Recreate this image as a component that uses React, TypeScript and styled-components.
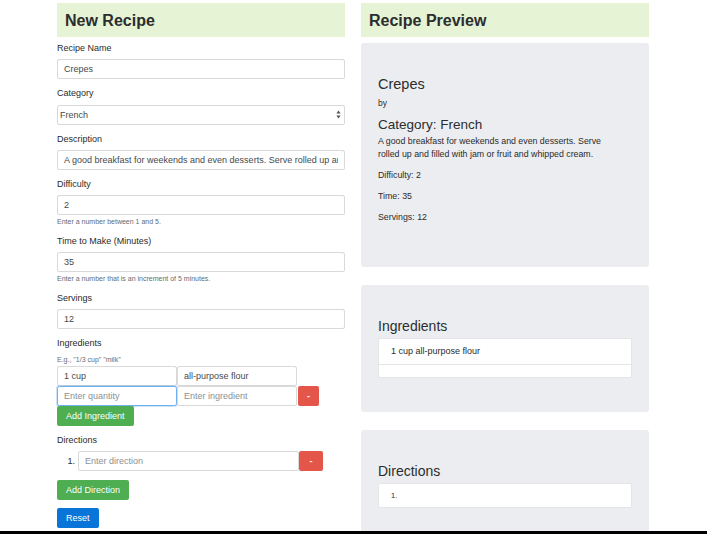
import React, { useState } from "react";
import styled, { createGlobalStyle, css } from "styled-components";

const GlobalStyle = createGlobalStyle`
  html, body {
    margin: 0;
    padding: 0;
    overflow: hidden;
    background: #ffffff;
  }
  body {
    font-family: "Liberation Sans", Arial, Helvetica, sans-serif;
    color: #292b2c;
  }
  * { box-sizing: border-box; }
`;

const Page = styled.div`
  display: grid;
  grid-template-columns: 288px 288px;
  column-gap: 16px;
  padding: 3px 0 0 57px;
  align-items: start;
`;

const Column = styled.section`
  display: flex;
  flex-direction: column;
`;

const SectionHeader = styled.h2`
  margin: 0;
  height: 34px;
  line-height: 35px;
  padding-left: 8px;
  background: #e7f3d5;
  font-size: 16px;
  font-weight: 700;
  color: #2b2d2e;
`;

const Form = styled.form`
  display: flex;
  flex-direction: column;
  padding-top: 5px;
`;

const FormGroup = styled.div`
  display: flex;
  flex-direction: column;
  margin-bottom: 8px;
`;

const Label = styled.label`
  font-size: 9px;
  line-height: 13px;
  margin-bottom: 4px;
  color: #292b2c;
`;

const fieldBase = css`
  height: 20px;
  border: 1px solid rgba(0, 0, 0, 0.15);
  border-radius: 2.5px;
  background: #ffffff;
  font-family: "Liberation Sans", Arial, Helvetica, sans-serif;
  font-size: 9px;
  color: #464a4c;
  outline: none;
  &::placeholder {
    color: #8d9092;
  }
`;

const TextInput = styled.input<{ $focused?: boolean; $width?: number }>`
  ${fieldBase};
  width: ${(p) => (p.$width ? `${p.$width}px` : "100%")};
  flex: ${(p) => (p.$width ? "0 0 auto" : "1 1 auto")};
  padding: 0 6px;
  ${(p) =>
    p.$focused &&
    css`
      border-color: #6fb0ee;
      box-shadow: 0 0 0 1px rgba(111, 176, 238, 0.35);
    `}
`;

const SelectWrap = styled.div`
  position: relative;
  width: 100%;
`;

const Select = styled.select`
  ${fieldBase};
  width: 100%;
  padding: 0 0 0 2px;
  appearance: none;
  -webkit-appearance: none;
`;

const SelectArrows = styled.svg`
  position: absolute;
  right: 4px;
  top: 6px;
  pointer-events: none;
`;

const HelpText = styled.small`
  display: block;
  font-size: 7px;
  line-height: 11px;
  margin-top: 1px;
  color: #636c72;
`;

const HintText = styled(HelpText)`
  margin-top: 0;
  margin-bottom: 1px;
  line-height: 11px;
`;

const IngredientRow = styled.div`
  display: flex;
  align-items: center;
`;

const RemoveButton = styled.button<{ $width: number; $gap?: number }>`
  width: ${(p) => p.$width}px;
  height: 20px;
  margin-left: ${(p) => p.$gap ?? 0}px;
  padding: 0;
  border: none;
  border-radius: 2px;
  background: #e5564a;
  color: #ffffff;
  font-family: "Liberation Sans", Arial, sans-serif;
  font-size: 9px;
  font-weight: 700;
  line-height: 20px;
  cursor: pointer;
`;

const Button = styled.button<{ $variant: "success" | "primary"; $top?: number }>`
  align-self: flex-start;
  height: 20px;
  margin-top: ${(p) => p.$top ?? 0}px;
  padding: 0 9px;
  border: none;
  border-radius: 2px;
  background: ${(p) => (p.$variant === "success" ? "#4fae52" : "#0a75d9")};
  color: #ffffff;
  font-family: "Liberation Sans", Arial, sans-serif;
  font-size: 9px;
  line-height: 20px;
  cursor: pointer;
`;

const DirectionRow = styled.div`
  display: flex;
  align-items: center;
`;

const DirectionNumber = styled.span`
  width: 18px;
  margin-right: 3px;
  text-align: right;
  font-size: 9px;
  color: #292b2c;
`;

const PreviewCard = styled.article`
  margin-top: 6px;
  margin-bottom: 12px;
  padding: 33px 17px 34px;
  background: #ecedf0;
  border-radius: 3px;
  & + & {
    margin-top: 6px;
  }
`;

const PreviewTitle = styled.h3`
  margin: 0 0 4px;
  font-size: 14.5px;
  line-height: 17px;
  font-weight: 400;
  color: #2b2d2e;
`;

const ByLine = styled.p`
  margin: 0 0 7px;
  font-size: 8.5px;
  line-height: 13px;
`;

const CategoryTitle = styled.h4`
  margin: 0 0 2px;
  font-size: 13.5px;
  line-height: 16px;
  font-weight: 400;
  color: #2b2d2e;
`;

const PreviewText = styled.p`
  margin: 0 0 8px;
  font-size: 8.8px;
  line-height: 13px;
  color: #292b2c;
  max-width: 240px;
  &:last-child {
    margin-bottom: 9px;
  }
`;

const PreviewHeading = styled.h4`
  margin: 0 0 3px;
  font-size: 14px;
  line-height: 17px;
  font-weight: 400;
  color: #2b2d2e;
`;

const ListGroup = styled.ul`
  margin: 0;
  padding: 0;
  list-style: none;
  background: #ffffff;
  border: 1px solid rgba(0, 0, 0, 0.1);
  border-radius: 2px;
`;

const ListItem = styled.li<{ $small?: boolean }>`
  padding: 6px 12px;
  min-height: 12px;
  font-size: ${(p) => (p.$small ? "7.5px" : "9px")};
  line-height: ${(p) => (p.$small ? "11px" : "13px")};
  color: #292b2c;
  & + & {
    border-top: 1px solid rgba(0, 0, 0, 0.1);
  }
  &:empty {
    min-height: 0;
  }
`;

const BottomEdge = styled.div`
  position: fixed;
  left: 0;
  right: 0;
  bottom: 0;
  height: 3px;
  background: #000000;
`;

type Ingredient = { quantity: string; name: string };

export default function App() {
  const [name, setName] = useState("Crepes");
  const [category, setCategory] = useState("French");
  const [description, setDescription] = useState(
    "A good breakfast for weekends and even desserts. Serve rolled up and filled with jam or fruit and whipped cream."
  );
  const [difficulty, setDifficulty] = useState("2");
  const [time, setTime] = useState("35");
  const [servings, setServings] = useState("12");
  const [ingredients] = useState<Ingredient[]>([{ quantity: "1 cup", name: "all-purpose flour" }]);

  return (
    <>
      <GlobalStyle />
      <Page>
        <Column>
          <SectionHeader>New Recipe</SectionHeader>
          <Form onSubmit={(e) => e.preventDefault()}>
            <FormGroup>
              <Label>Recipe Name</Label>
              <TextInput value={name} onChange={(e) => setName(e.target.value)} />
            </FormGroup>
            <FormGroup>
              <Label>Category</Label>
              <SelectWrap>
                <Select value={category} onChange={(e) => setCategory(e.target.value)}>
                  <option>French</option>
                  <option>Italian</option>
                  <option>American</option>
                </Select>
                <SelectArrows width="5" height="9" viewBox="0 0 5 9">
                  <path d="M2.5 0.5 L4.6 3.6 L0.4 3.6 Z" fill="#555" />
                  <path d="M2.5 8.5 L4.6 5.4 L0.4 5.4 Z" fill="#555" />
                </SelectArrows>
              </SelectWrap>
            </FormGroup>
            <FormGroup>
              <Label>Description</Label>
              <TextInput value={description} onChange={(e) => setDescription(e.target.value)} />
            </FormGroup>
            <FormGroup>
              <Label>Difficulty</Label>
              <TextInput value={difficulty} onChange={(e) => setDifficulty(e.target.value)} />
              <HelpText>Enter a number between 1 and 5.</HelpText>
            </FormGroup>
            <FormGroup>
              <Label>Time to Make (Minutes)</Label>
              <TextInput value={time} onChange={(e) => setTime(e.target.value)} />
              <HelpText>Enter a number that is an increment of 5 minutes.</HelpText>
            </FormGroup>
            <FormGroup>
              <Label>Servings</Label>
              <TextInput value={servings} onChange={(e) => setServings(e.target.value)} />
            </FormGroup>
            <FormGroup>
              <Label>Ingredients</Label>
              <HintText>E.g., "1/3 cup" "milk"</HintText>
              {ingredients.map((ing, i) => (
                <IngredientRow key={i}>
                  <TextInput $width={120} defaultValue={ing.quantity} />
                  <TextInput $width={120} defaultValue={ing.name} />
                </IngredientRow>
              ))}
              <IngredientRow>
                <TextInput $width={120} $focused placeholder="Enter quantity" />
                <TextInput $width={120} placeholder="Enter ingredient" />
                <RemoveButton type="button" $width={21} $gap={1}>
                  -
                </RemoveButton>
              </IngredientRow>
              <Button type="button" $variant="success">
                Add Ingredient
              </Button>
            </FormGroup>
            <FormGroup>
              <Label>Directions</Label>
              <DirectionRow>
                <DirectionNumber>1.</DirectionNumber>
                <TextInput $width={221} placeholder="Enter direction" />
                <RemoveButton type="button" $width={24}>
                  -
                </RemoveButton>
              </DirectionRow>
              <Button type="button" $variant="success" $top={9}>
                Add Direction
              </Button>
              <Button type="reset" $variant="primary" $top={8}>
                Reset
              </Button>
            </FormGroup>
          </Form>
        </Column>

        <Column>
          <SectionHeader>Recipe Preview</SectionHeader>
          <PreviewCard>
            <PreviewTitle>{name}</PreviewTitle>
            <ByLine>by</ByLine>
            <CategoryTitle>Category: {category}</CategoryTitle>
            <PreviewText>{description}</PreviewText>
            <PreviewText>Difficulty: {difficulty}</PreviewText>
            <PreviewText>Time: {time}</PreviewText>
            <PreviewText>Servings: {servings}</PreviewText>
          </PreviewCard>
          <PreviewCard>
            <PreviewHeading>Ingredients</PreviewHeading>
            <ListGroup>
              {ingredients.map((ing, i) => (
                <ListItem key={i}>
                  {ing.quantity} {ing.name}
                </ListItem>
              ))}
              <ListItem />
            </ListGroup>
          </PreviewCard>
          <PreviewCard>
            <PreviewHeading>Directions</PreviewHeading>
            <ListGroup>
              <ListItem $small>1.</ListItem>
            </ListGroup>
          </PreviewCard>
        </Column>
      </Page>
      <BottomEdge />
    </>
  );
}
